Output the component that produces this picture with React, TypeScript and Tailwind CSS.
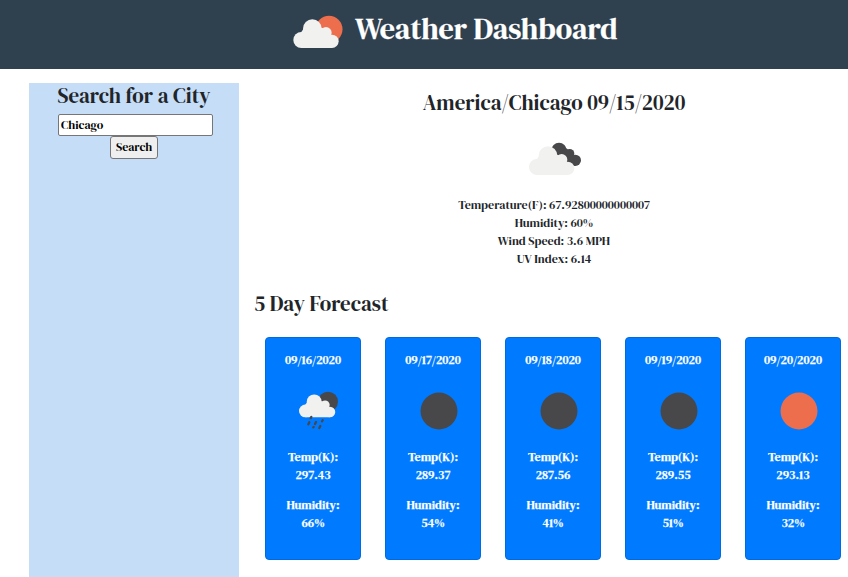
import React from "react";

const CloudShape = ({ transform }: { transform?: string }) => (
  <g fill="#f1f1f0" transform={transform}>
    <circle cx="64" cy="105" r="24" />
    <circle cx="97" cy="71" r="28" />
    <circle cx="138" cy="83" r="17" />
    <circle cx="156" cy="109" r="20" />
    <path d="M64 129H156V100L145 75L100 60L70 72L58 90Z" />
  </g>
);

const FewClouds = () => (
  <svg viewBox="39 30 150 102" className="h-[34px] w-[50px]">
    <circle cx="147" cy="73" r="40.5" fill="#ec6e4c" />
    <CloudShape />
  </svg>
);

const BrokenClouds = () => (
  <svg viewBox="24 18 162 105" className="h-[35px] w-[54px]">
    <g fill="#48484a">
      <circle cx="117" cy="46" r="23" />
      <circle cx="149" cy="56" r="14" />
      <circle cx="166" cy="76" r="17" />
      <path d="M112 55L140 40L160 62L166 93L140 85Z" />
    </g>
    <CloudShape transform="translate(-13 -9)" />
  </svg>
);

const RainIcon = () => (
  <svg viewBox="24 33 123 120" className="h-[40px] w-[41px]">
    <circle cx="114" cy="65" r="30" fill="#48484a" />
    <CloudShape transform="translate(-5 8.8) scale(.8)" />
    <g stroke="#48484a" strokeWidth="7" strokeLinecap="round">
      <path d="M64 111L62 114M58 127L55 133M78 126L75 132M98 121L96 124M71 141L70 142M91 138L88 144" />
    </g>
  </svg>
);

const Disc = ({ fill }: { fill: string }) => (
  <svg viewBox="0 0 38 38" className="mt-px h-[38px] w-[38px]">
    <circle cx="19" cy="19" r="18.5" fill={fill} />
  </svg>
);

const days = [
  { date: "09/16/2020", icon: "rain", temp: "297.43", humidity: "66%" },
  { date: "09/17/2020", icon: "night", temp: "289.37", humidity: "54%" },
  { date: "09/18/2020", icon: "night", temp: "287.56", humidity: "41%" },
  { date: "09/19/2020", icon: "night", temp: "289.55", humidity: "51%" },
  { date: "09/20/2020", icon: "sun", temp: "293.13", humidity: "32%" },
];

const DayIcon = ({ icon }: { icon: string }) => {
  if (icon === "rain") return <RainIcon />;
  return <Disc fill={icon === "sun" ? "#ec6e4c" : "#48484a"} />;
};

export default function App() {
  return (
    <div className="h-[577px] w-[848px] overflow-hidden bg-white font-['DM_Serif_Display','Liberation_Serif',serif] text-[12px] leading-[18px] text-[#212529]">
      <header className="flex h-[69px] items-start bg-[#2f404f] pl-[293px] pt-[11px]">
        <div className="pt-1">
          <FewClouds />
        </div>
        <h1 className="ml-[12px] whitespace-nowrap text-[30px] leading-9 text-white [-webkit-text-stroke:0.3px_white]">
          Weather Dashboard
        </h1>
      </header>
      <div className="flex">
        <aside className="ml-[29px] mt-[14px] flex h-[494px] w-[210px] flex-col items-center bg-[#c6ddf7]">
          <h2 className="whitespace-nowrap text-[21px] leading-[25px]">
            Search for a City
          </h2>
          <input
            className="mt-[6px] ml-[3px] h-[22px] w-[155px] rounded-[2px] border border-[#767676] bg-white px-[2px] text-[12px] text-black outline-none"
            defaultValue="Chicago"
          />
          <button className="h-[23px] w-[48px] rounded-[3px] border border-[#767676] bg-[#efefef] pb-px text-[12px] leading-[18px] text-black">
            Search
          </button>
        </aside>
        <main className="ml-[15px] w-[594px]">
          <section className="pl-px pt-[21px]">
            <div className="flex w-[598px] flex-col items-center">
              <h2 className="whitespace-nowrap text-[21px] leading-[26px]">
                America/Chicago 09/15/2020
              </h2>
              <div className="mt-[25px] h-[55px] pl-[2px]">
                <BrokenClouds />
              </div>
              <p className="whitespace-nowrap">Temperature(F): 67.92800000000007</p>
              <p>Humidity: 60%</p>
              <p>Wind Speed: 3.6 MPH</p>
              <p>UV Index: 6.14</p>
            </div>
          </section>
          <h2 className="mt-[23px] whitespace-nowrap text-[21px] leading-[25px]">
            5 Day Forecast
          </h2>
          <div className="ml-[11px] mt-[21px] flex gap-6">
            {days.map((day) => (
              <article
                key={day.date}
                className="flex h-[223px] w-24 shrink-0 flex-col items-center rounded border border-[#006bdf] bg-[#007bff] pt-[13px] text-center text-white [-webkit-text-stroke:0.25px_white]"
              >
                <p>{day.date}</p>
                <div className="flex h-[79px] items-start pl-[11px] pt-[22px]">
                  <DayIcon icon={day.icon} />
                </div>
                <p>Temp(K):</p>
                <p>{day.temp}</p>
                <p className="mt-3">Humidity:</p>
                <p>{day.humidity}</p>
              </article>
            ))}
          </div>
        </main>
      </div>
    </div>
  );
}
